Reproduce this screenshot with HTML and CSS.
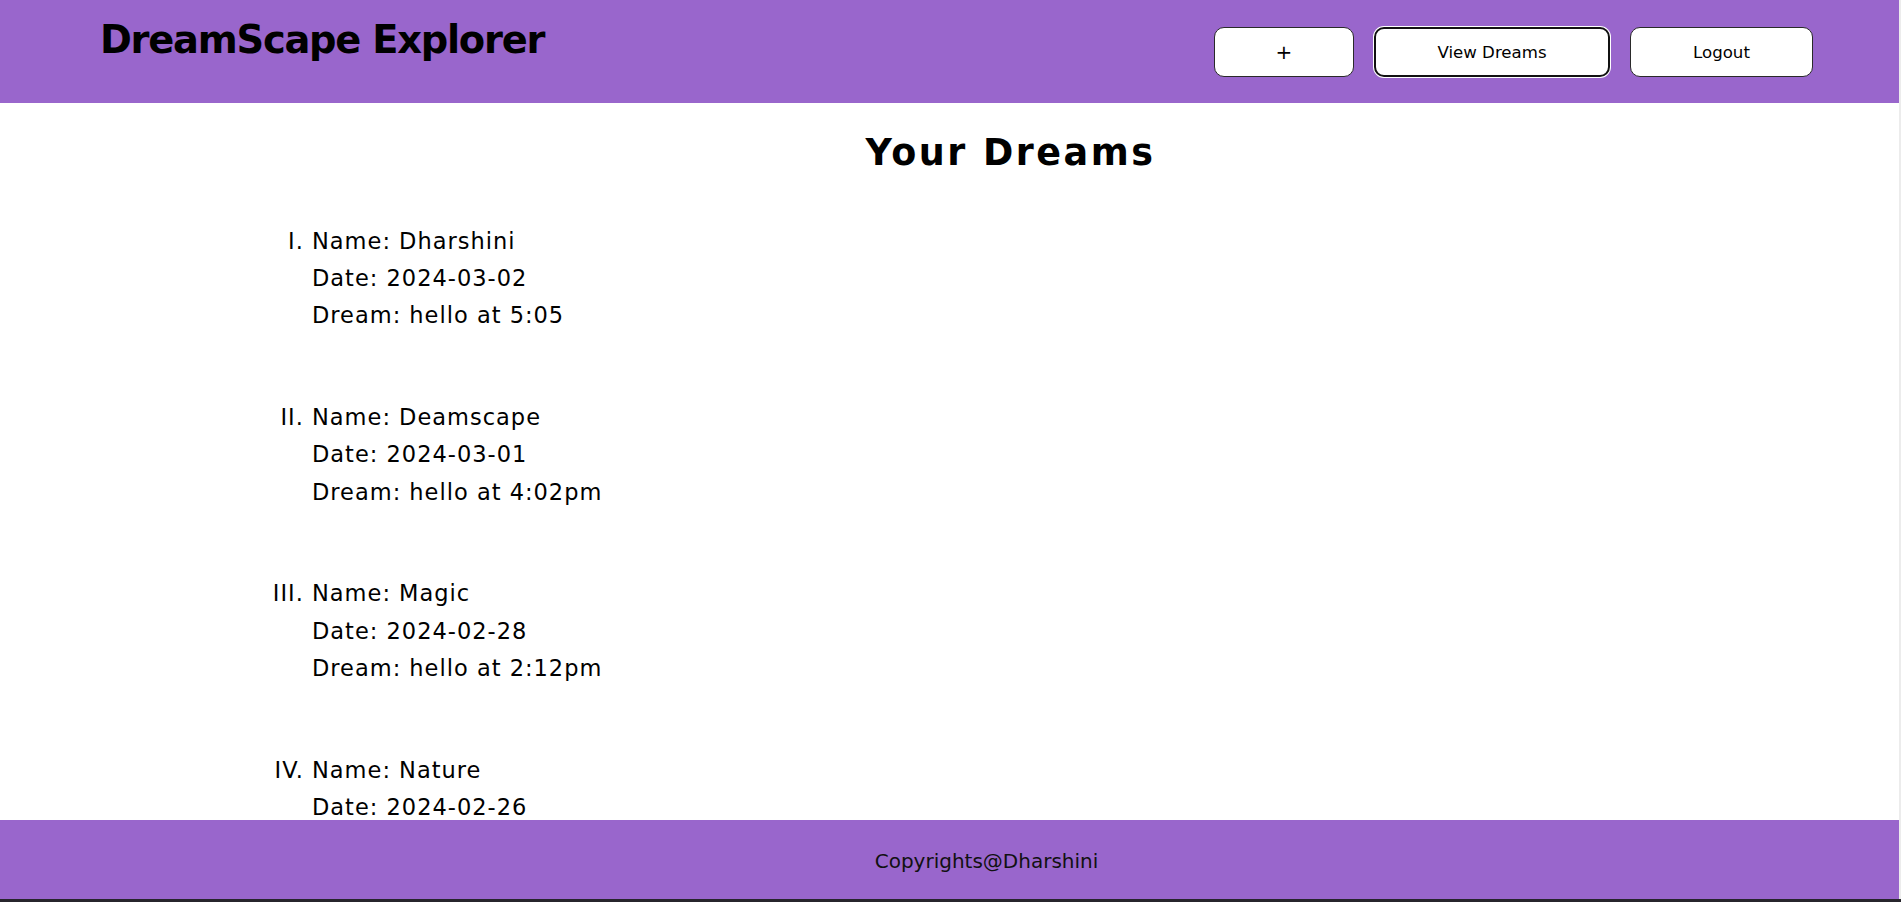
FILE: index.html
```html
<!DOCTYPE html>
<html lang="en">
<head>
<meta charset="utf-8">
<title>DreamScape Explorer</title>
<link rel="stylesheet" href="styles.css">
</head>
<body>
<div class="app">
  <header class="topbar">
    <h1 class="brand">DreamScape Explorer</h1>
    <nav class="nav">
      <button class="btn btn-add">+</button>
      <button class="btn btn-view">View Dreams</button>
      <button class="btn btn-logout">Logout</button>
    </nav>
  </header>
  <main class="content">
    <h2 class="title">Your Dreams</h2>
    <ol class="dreams">
      <li>Name: Dharshini<br>Date: 2024-03-02<br>Dream: hello at 5:05</li>
      <li>Name: Deamscape<br>Date: 2024-03-01<br>Dream: hello at 4:02pm</li>
      <li>Name: Magic<br>Date: 2024-02-28<br>Dream: hello at 2:12pm</li>
      <li>Name: Nature<br>Date: 2024-02-26</li>
    </ol>
  </main>
  <footer class="footer">Copyrights@Dharshini</footer>
</div>
</body>
</html>
```

FILE: styles.css
```css
html {
  background: #27252c;
}
body {
  margin: 0;
  height: calc(100vh - 3px);
  background: #ececec;
  font-family: "DejaVu Sans", "Liberation Sans", sans-serif;
  color: #000;
}
.app {
  height: 100%;
  margin-right: 2px;
  background: #fff;
  display: flex;
  flex-direction: column;
  overflow: hidden;
}
.topbar {
  flex: 0 0 103px;
  background: #9966cc;
  display: flex;
  justify-content: space-between;
  align-items: flex-start;
  padding: 0 86px 0 100px;
}
.brand {
  margin: 21px 0 0;
  font-size: 38.4px;
  line-height: 1;
  font-weight: 700;
  letter-spacing: -1.25px;
}
.nav {
  display: flex;
  gap: 20px;
  margin-top: 27px;
}
.btn {
  box-sizing: border-box;
  height: 50px;
  padding: 0;
  background: #fff;
  color: #000;
  border: 1px solid #2a2a2a;
  border-radius: 10px;
  font-family: "DejaVu Sans", "Liberation Sans", sans-serif;
  font-size: 16.6px;
  display: flex;
  align-items: center;
  justify-content: center;
}
.btn-add {
  width: 140px;
  font-size: 20px;
}
.btn-view {
  width: 236px;
  border: 2px solid #111;
  box-shadow: 0 0 0 1px #fff;
}
.btn-logout {
  width: 183px;
}
.content {
  flex: 1;
  overflow: hidden;
  padding: 28px 0 0 116px;
}
.title {
  margin: 0;
  padding-left: 6px;
  text-align: center;
  font-size: 36.5px;
  line-height: 1.2;
  font-weight: 700;
  letter-spacing: 2.5px;
}
.dreams {
  list-style: upper-roman;
  margin: 48px 0 0;
  padding-left: 196px;
  font-size: 22.5px;
  line-height: 37.33px;
  letter-spacing: 1px;
}
.dreams li {
  margin-bottom: 64.3px;
}
.footer {
  flex: 0 0 79px;
  box-sizing: border-box;
  background: #9966cc;
  display: flex;
  align-items: center;
  justify-content: center;
  padding: 2px 0 0 74px;
  font-size: 20px;
  color: #111;
}
```
